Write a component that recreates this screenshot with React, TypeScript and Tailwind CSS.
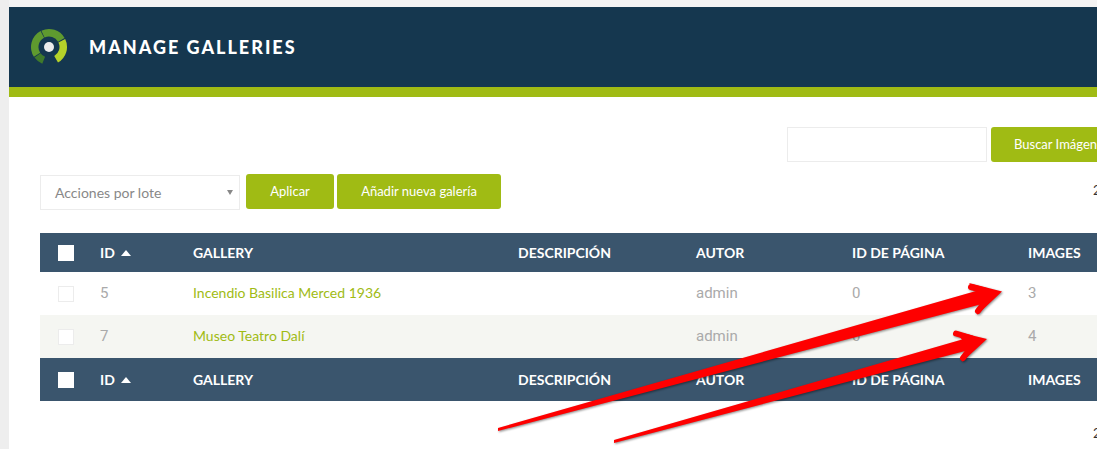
// clockwise angle from 12 o'clock -> ring segment path
function arc(a0: number, a1: number, r0 = 10.5, r1 = 18, cx = 49, cy = 48) {
  const p = (r: number, a: number) => {
    const t = (a * Math.PI) / 180;
    return `${(cx + r * Math.sin(t)).toFixed(2)} ${(cy - r * Math.cos(t)).toFixed(2)}`;
  };
  const large = a1 - a0 > 180 ? 1 : 0;
  return `M${p(r1, a0)} A${r1} ${r1} 0 ${large} 1 ${p(r1, a1)} L${p(r0, a1)} A${r0} ${r0} 0 ${large} 0 ${p(r0, a0)} Z`;
}

function Logo() {
  return (
    <svg width="40" height="40" viewBox="29 28 40 40" className="shrink-0">
      <path d={arc(-158, -126)} fill="#3f7a2b" />
      <path d={arc(-123, -28)} fill="#5f9a2f" />
      <path d={arc(-25, 60)} fill="#5f9a2f" />
      <path d={arc(64, 150)} fill="#b5d22a" />
      <circle cx="49" cy="48" r="5" fill="#ececec" />
    </svg>
  );
}

function HeadRow({ tall }: { tall?: boolean }) {
  const th = "text-left font-bold text-[14px] text-white p-0 uppercase";
  return (
    <tr className={tall ? "h-[43px] bg-[#3a556d]" : "h-[39px] bg-[#3a556d]"}>
      <th className="p-0 pl-[18px] text-left">
        <span className="block w-4 h-4 bg-white" />
      </th>
      <th className={th}>
        <span className="flex items-center gap-[6px]">
          ID
          <span className="w-0 h-0 border-x-[5px] border-x-transparent border-b-[6px] border-b-white" />
        </span>
      </th>
      <th className={th}>Gallery</th>
      <th className={th}>Descripción</th>
      <th className={th}>Autor</th>
      <th className={th}>ID de página</th>
      <th className={th}>Images</th>
    </tr>
  );
}

function Row({ id, name, images, alt }: { id: number; name: string; images: number; alt?: boolean }) {
  const td = "p-0 text-[#aaaaaa] font-['Roboto',sans-serif] text-[15px]";
  return (
    <tr className={alt ? "h-[43px] bg-[#f5f6f2]" : "h-[43px] bg-white"}>
      <td className="p-0 pl-[18px]">
        <span className="block w-4 h-4 bg-white border border-[#ececec]" />
      </td>
      <td className={td}>{id}</td>
      <td className="p-0 pb-[2px] text-[14px] text-[#a0bb14]">{name}</td>
      <td className={td} />
      <td className={td + " text-[14px]"}>admin</td>
      <td className={td}>0</td>
      <td className={td}>{images}</td>
    </tr>
  );
}

function Arrows() {
  return (
    <svg className="absolute left-0 top-0 pointer-events-none" width="1097" height="449" viewBox="0 0 1097 449">
      <g fill="#fe0000" className="drop-shadow-[1px_1px_1px_rgba(0,0,0,0.45)]">
        <path d="M498 428 L976 291 L969 283 L1002 291.5 L977 315 L982 304 L498 431 Z" />
        <path d="M971 287 L986 291" stroke="#fe0000" strokeWidth="6" strokeLinecap="round" />
        <path d="M978 311 L988 298" stroke="#fe0000" strokeWidth="6" strokeLinecap="round" />
        <path d="M614 440 L962 339.5 L954 331 L987 339 L962 362 L967 350.5 L614 443 Z" />
        <path d="M956 333.5 L971 338" stroke="#fe0000" strokeWidth="6" strokeLinecap="round" />
        <path d="M963 358 L973 345" stroke="#fe0000" strokeWidth="6" strokeLinecap="round" />
      </g>
    </svg>
  );
}

export default function App() {
  return (
    <div className="relative w-[1097px] h-[449px] overflow-hidden bg-[#f3f3f3] pt-[7px] pl-[9px] font-['Lato',sans-serif]">
      <div className="absolute left-0 top-0 bottom-0 w-[9px] bg-[#eeeeee]" />
      <div className="w-[1200px] h-[442px] bg-white">
        <header className="h-[90px] bg-[#15374f] border-b-[10px] border-[#a0bb14] flex items-center gap-[20px] pl-[20px]">
          <Logo />
          <h1 className="text-[18px] font-black text-white tracking-[2px] uppercase">Manage Galleries</h1>
        </header>

        <div className="w-[1104px] ml-[31px] pt-[30px]">
          <div className="flex justify-end gap-1">
            <input className="w-[200px] h-[35px] border border-[#ececec] bg-white" />
            <button className="w-[153px] h-[35px] pl-[23px] text-left rounded-[3px] bg-[#a0bb14] text-white text-[13px]">Buscar Imágenes</button>
          </div>

          <div className="flex items-start justify-between mt-3">
            <div className="flex items-start">
              <div className="relative w-[200px] h-[35px] mt-px border border-[#ececec] bg-white flex items-center pl-[14px] text-[14px] text-[#888888]">
                Acciones por lote
                <span className="absolute right-[6px] top-[14px] w-0 h-0 border-x-[3px] border-x-transparent border-t-[5px] border-t-[#888888]" />
              </div>
              <button className="ml-[6px] w-[88px] h-[35px] rounded-[3px] bg-[#a0bb14] text-white text-[13px]">Aplicar</button>
              <button className="ml-[3px] w-[164px] h-[35px] rounded-[3px] bg-[#a0bb14] text-white text-[13px]">Añadir nueva galería</button>
            </div>
            <span className="text-[13px] text-[#333333] mt-[7px] -mr-[19px]">2 elementos</span>
          </div>

          <table className="w-full table-fixed border-collapse mt-[23px]">
            <colgroup>
              <col className="w-[60px]" />
              <col className="w-[93px]" />
              <col className="w-[325px]" />
              <col className="w-[178px]" />
              <col className="w-[156px]" />
              <col className="w-[176px]" />
              <col />
            </colgroup>
            <thead>
              <HeadRow />
            </thead>
            <tbody>
              <Row id={5} name="Incendio Basilica Merced 1936" images={3} />
              <Row id={7} name="Museo Teatro Dalí" images={4} alt />
            </tbody>
            <tfoot>
              <HeadRow tall />
            </tfoot>
          </table>

          <div className="text-right text-[13px] text-[#333333] mt-[23px] -mr-[19px]">2 elementos</div>
        </div>
      </div>
      <Arrows />
    </div>
  );
}
